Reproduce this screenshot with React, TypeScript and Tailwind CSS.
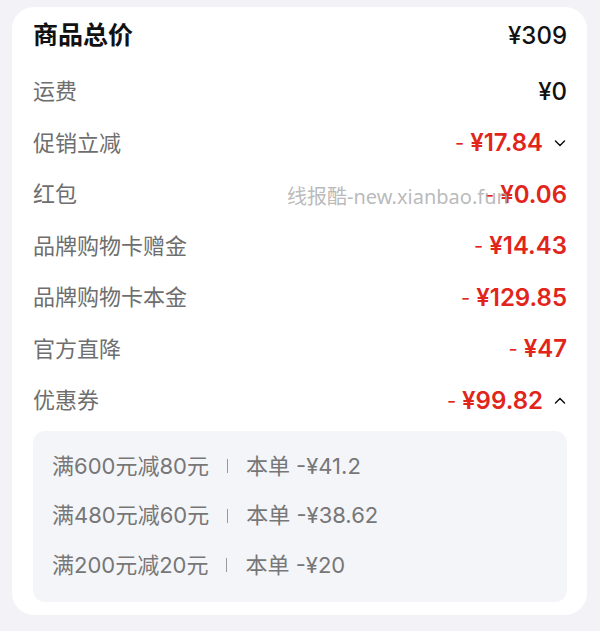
import React from "react";

const rows: { label: string; value: string; minus?: boolean; chevron?: "up" | "down" }[] = [
  { label: "运费", value: "¥0" },
  { label: "促销立减", value: "¥17.84", minus: true, chevron: "down" },
  { label: "红包", value: "¥0.06", minus: true },
  { label: "品牌购物卡赠金", value: "¥14.43", minus: true },
  { label: "品牌购物卡本金", value: "¥129.85", minus: true },
  { label: "官方直降", value: "¥47", minus: true },
  { label: "优惠券", value: "¥99.82", minus: true, chevron: "up" },
];

const coupons = [
  { rule: "满600元减80元", amount: "-¥41.2" },
  { rule: "满480元减60元", amount: "-¥38.62" },
  { rule: "满200元减20元", amount: "-¥20" },
];

const Chevron = ({ dir }: { dir: "up" | "down" }) => (
  <svg width="14" height="14" viewBox="0 0 14 14" fill="none" className="ml-[10px]">
    <path
      d={dir === "down" ? "M2.5 5l4.5 4.5L11.5 5" : "M2.5 9l4.5-4.5L11.5 9"}
      stroke="#111"
      strokeWidth="1.5"
      strokeLinecap="round"
      strokeLinejoin="round"
    />
  </svg>
);

export default function App() {
  return (
    <div
      className="w-[600px] h-[631px] bg-[#f3f3f7] pt-[7px] px-[12px]"
      style={{ fontFamily: 'Inter, "Noto Sans CJK SC", sans-serif' }}
    >
      <div className="relative w-[575px] bg-white rounded-[22px] pt-[3px] pb-[13px] pl-[21px] pr-[20px]">
        {/* Header */}
        <div className="h-[52px] flex items-center justify-between">
          <span className="text-[25px] font-bold text-[#111]">商品总价</span>
          <span className="text-[24px] font-medium text-[#111]">¥309</span>
        </div>

        {/* Rows */}
        <div className="mt-[4px]">
          {rows.map((r) => (
            <div key={r.label} className="h-[51.5px] flex items-center justify-between">
              <span className="text-[22px] text-[#6e6e6e]">{r.label}</span>
              <div className="flex items-center">
                {r.minus ? (
                  <span className="flex items-center text-[24px] font-semibold text-[#e1251b]">
                    <span className="font-normal text-[20px] mr-[6px]">-</span>
                    {r.value}
                  </span>
                ) : (
                  <span className="text-[24px] font-medium text-[#111]">{r.value}</span>
                )}
                {r.chevron && <Chevron dir={r.chevron} />}
              </div>
            </div>
          ))}
        </div>

        {/* Coupon details */}
        <div className="mt-[4px] bg-[#f4f5f9] rounded-[12px] pt-[11px] pb-[12px] pl-[19px]">
          {coupons.map((c) => (
            <div key={c.rule} className="h-[49.5px] flex items-center text-[22px] text-[#777]">
              <span>{c.rule}</span>
              <span className="mx-[18px] w-px h-[14px] bg-[#999]" />
              <span>本单 {c.amount}</span>
            </div>
          ))}
        </div>

        {/* Watermark */}
        <div
          className="absolute left-[275px] top-[175px] text-[20px] text-[#a8a8a8]/80 pointer-events-none"
          style={{ fontFamily: '"Noto Sans", "Noto Sans CJK SC", sans-serif' }}
        >
          线报酷-new.xianbao.fun
        </div>
      </div>
    </div>
  );
}
